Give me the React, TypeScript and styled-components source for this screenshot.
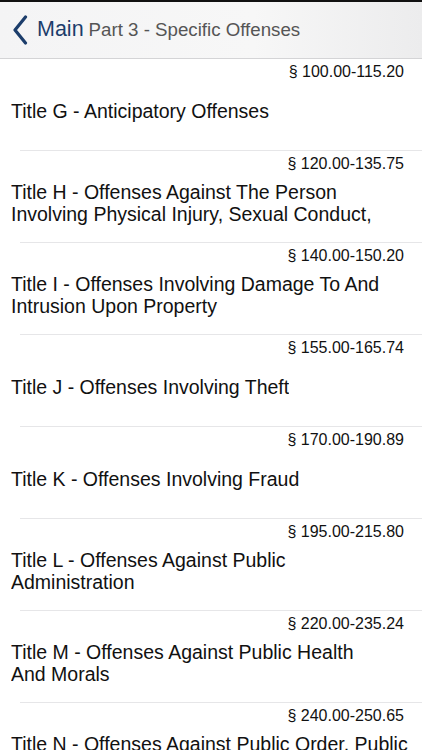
import React from "react";
import styled, { createGlobalStyle } from "styled-components";

const Global = createGlobalStyle`
  html, body { margin: 0; padding: 0; background: #fff; }
  body { font-family: "Liberation Sans", Arial, sans-serif; overflow: hidden; }
`;

const Screen = styled.div`
  width: 422px;
  height: 750px;
  overflow: hidden;
  display: flex;
  flex-direction: column;
  background: #fff;
  border-top: 2px solid #111;
  box-sizing: border-box;
`;

const NavBar = styled.div`
  height: 56px;
  flex: none;
  display: flex;
  align-items: center;
  padding-left: 12px;
  background: linear-gradient(to right, #f4f4f5, #f7f7f7 60%, #ececed);
  border-bottom: 1px solid #d4d4d6;
`;

const Back = styled.div`
  display: flex;
  align-items: center;
  gap: 9px;
  color: #1c3d6b;
`;

const BackLabel = styled.span`
  font-size: 21.5px;
  line-height: 1;
`;

const NavTitle = styled.span`
  margin-left: 5px;
  font-size: 18.7px;
  color: #555;
  line-height: 1;
`;

const List = styled.div`
  display: flex;
  flex-direction: column;
`;

const Row = styled.div`
  height: 92px;
  flex: none;
  box-sizing: border-box;
  display: flex;
  flex-direction: column;
  position: relative;
  &::after {
    content: "";
    position: absolute;
    left: 20px;
    right: 0;
    bottom: 0;
    height: 1px;
    background: #e6e6e8;
  }
`;

const Section = styled.div`
  height: 22px;
  padding-right: 18px;
  box-sizing: border-box;
  display: flex;
  align-items: flex-end;
  justify-content: flex-end;
  font-size: 16px;
  color: #111;
`;

const TitleArea = styled.div`
  flex: 1;
  display: flex;
  align-items: center;
  padding: 0 8px 10px 11px;
`;

const Title = styled.div`
  display: flex;
  flex-direction: column;
  font-size: 19.5px;
  line-height: 22px;
  color: #111;
  max-height: 44px;
  overflow: hidden;
`;

const Line = styled.span`
  white-space: nowrap;
`;

const Chevron = () => (
  <svg width="16" height="30" viewBox="0 0 16 30" fill="none">
    <path d="M13.5 2 L3 15 L13.5 28" stroke="#1c3d6b" strokeWidth="3.2" strokeLinecap="round" strokeLinejoin="round" />
  </svg>
);

const items = [
  { s: "§ 100.00-115.20", t: ["Title G - Anticipatory Offenses"] },
  { s: "§ 120.00-135.75", t: ["Title H - Offenses Against The Person", "Involving Physical Injury, Sexual Conduct,"] },
  { s: "§ 140.00-150.20", t: ["Title I - Offenses Involving Damage To And", "Intrusion Upon Property"] },
  { s: "§ 155.00-165.74", t: ["Title J - Offenses Involving Theft"] },
  { s: "§ 170.00-190.89", t: ["Title K - Offenses Involving Fraud"] },
  { s: "§ 195.00-215.80", t: ["Title L - Offenses Against Public", "Administration"] },
  { s: "§ 220.00-235.24", t: ["Title M - Offenses Against Public Health", "And Morals"] },
  { s: "§ 240.00-250.65", t: ["Title N - Offenses Against Public Order, Public", "Sensibilities And The Right To Privacy"] },
];

export default function App() {
  return (
    <Screen>
      <Global />
      <NavBar>
        <Back>
          <Chevron />
          <BackLabel>Main</BackLabel>
        </Back>
        <NavTitle>Part 3 - Specific Offenses</NavTitle>
      </NavBar>
      <List>
        {items.map((it) => (
          <Row key={it.s}>
            <Section>{it.s}</Section>
            <TitleArea>
              <Title>
                {it.t.map((l) => (
                  <Line key={l}>{l}</Line>
                ))}
              </Title>
            </TitleArea>
          </Row>
        ))}
      </List>
    </Screen>
  );
}
